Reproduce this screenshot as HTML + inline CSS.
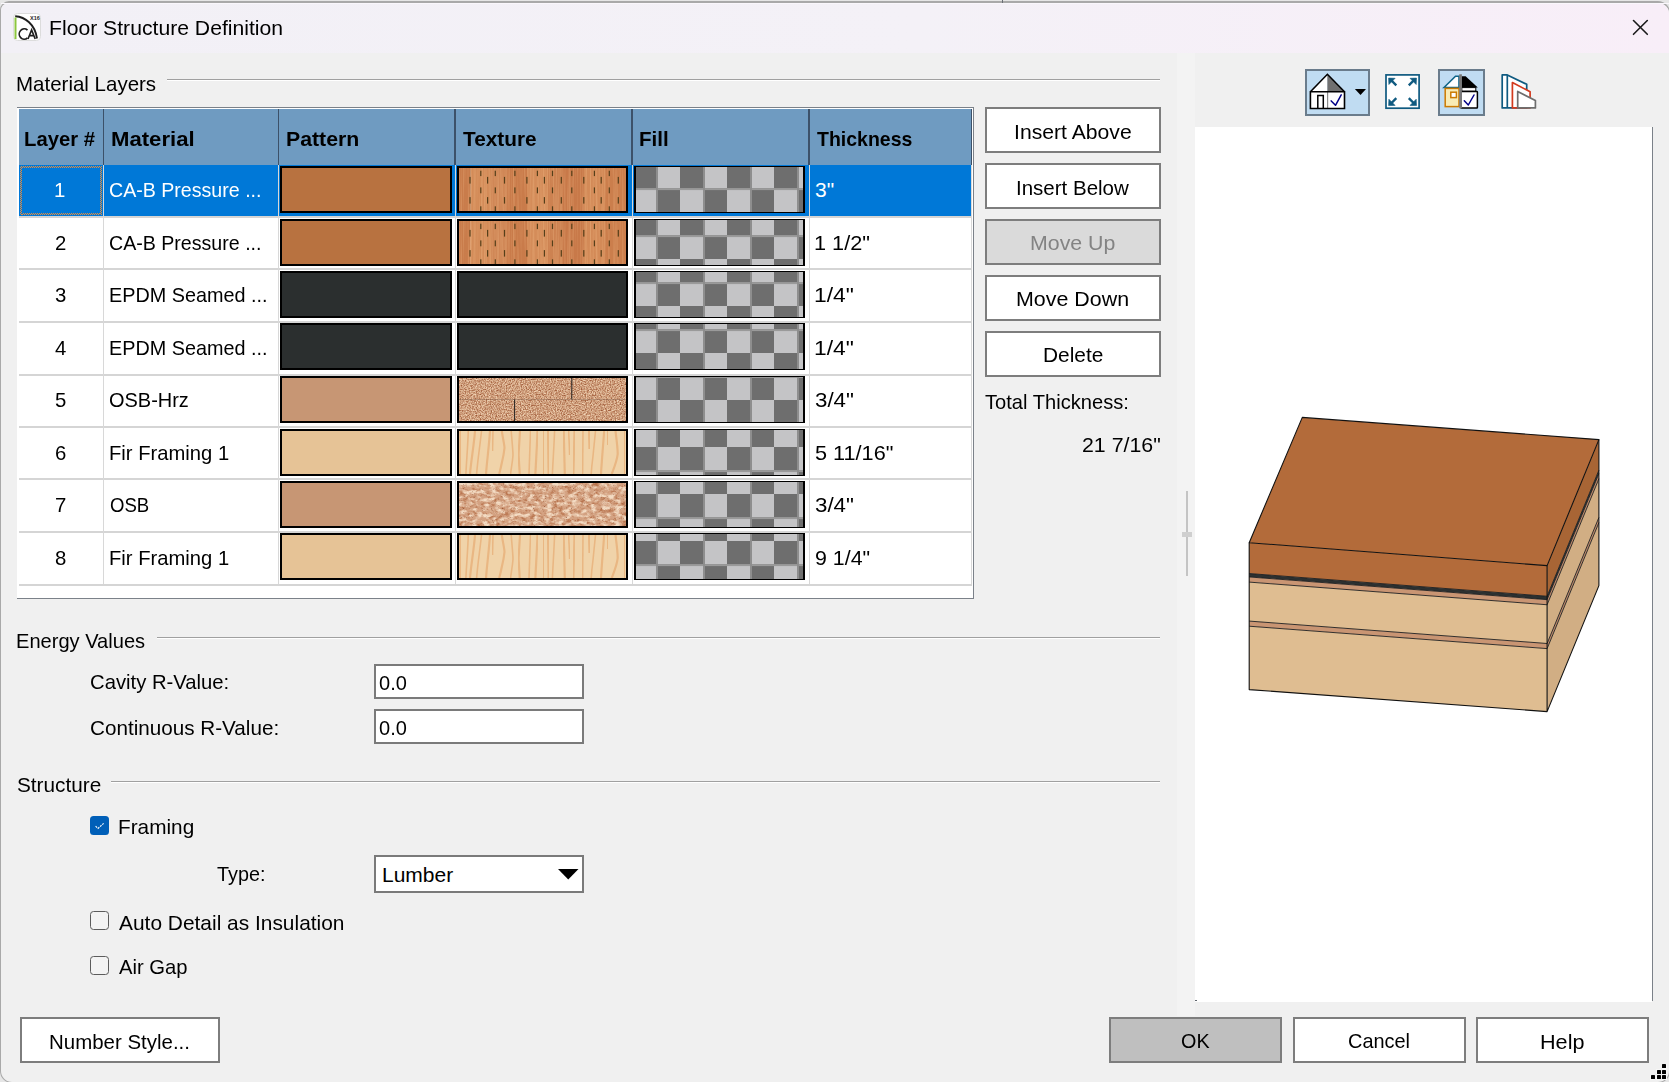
<!DOCTYPE html>
<html><head><meta charset="utf-8">
<style>
html,body{margin:0;padding:0;}
body{width:1669px;height:1082px;overflow:hidden;position:relative;background:#e6e6e6;font-family:"Liberation Sans",sans-serif;color:#000;}
.a{position:absolute;}
.t{position:absolute;white-space:pre;line-height:20px;font-size:21px;}
svg{position:absolute;overflow:visible;}
</style></head><body>
<svg width="0" height="0" style="position:absolute;left:0;top:0"><defs>
<filter id="fOsbh" x="0" y="0" width="100%" height="100%" color-interpolation-filters="sRGB">
<feTurbulence type="fractalNoise" baseFrequency="0.7 0.9" numOctaves="2" seed="3" result="n"/>
<feColorMatrix in="n" type="matrix" values="0 0 0 0 0  0 0 0 0 0  0 0 0 0 0  1.8 0 0 0 -0.45" result="a"/>
<feFlood flood-color="#f3d8bb" result="lt"/>
<feComposite in="lt" in2="a" operator="in" result="lts"/>
<feTurbulence type="fractalNoise" baseFrequency="0.8" numOctaves="1" seed="9" result="n2"/>
<feColorMatrix in="n2" type="matrix" values="0 0 0 0 0  0 0 0 0 0  0 0 0 0 0  0 2.6 0 0 -1.05" result="a2"/>
<feFlood flood-color="#9c5634" result="dk"/>
<feComposite in="dk" in2="a2" operator="in" result="dks"/>
<feMerge><feMergeNode in="SourceGraphic"/><feMergeNode in="lts"/><feMergeNode in="dks"/></feMerge>
</filter>
<filter id="fGrain" x="0" y="0" width="100%" height="100%" color-interpolation-filters="sRGB">
<feTurbulence type="fractalNoise" baseFrequency="0.7 0.015" numOctaves="2" seed="7" result="n"/>
<feColorMatrix in="n" type="matrix" values="0 0 0 0 1  0 0 0 0 0.82  0 0 0 0 0.62  0.7 0 0 0 -0.3" result="lt"/>
</filter>
<filter id="fBlur" x="-20%" y="-5%" width="140%" height="110%"><feGaussianBlur stdDeviation="0.45"/></filter>
<filter id="fOsb" x="0" y="0" width="100%" height="100%" color-interpolation-filters="sRGB">
<feTurbulence type="fractalNoise" baseFrequency="0.16 0.26" numOctaves="3" seed="5" result="n"/>
<feColorMatrix in="n" type="matrix" values="0 0 0 0 0  0 0 0 0 0  0 0 0 0 0  3.2 0 0 0 -1.35" result="a"/>
<feFlood flood-color="#f3dbc3" result="lt"/>
<feComposite in="lt" in2="a" operator="in" result="lts"/>
<feTurbulence type="fractalNoise" baseFrequency="0.22 0.3" numOctaves="3" seed="11" result="n2"/>
<feColorMatrix in="n2" type="matrix" values="0 0 0 0 0  0 0 0 0 0  0 0 0 0 0  0 3.2 0 0 -1.45" result="a2"/>
<feFlood flood-color="#b9754f" result="dk"/>
<feComposite in="dk" in2="a2" operator="in" result="dks"/>
<feTurbulence type="fractalNoise" baseFrequency="1.1" numOctaves="1" seed="21" result="n3"/>
<feColorMatrix in="n3" type="matrix" values="0 0 0 0 0  0 0 0 0 0  0 0 0 0 0  0 0 4 0 -2.6" result="a3"/>
<feFlood flood-color="#8a4a2c" result="sp"/>
<feComposite in="sp" in2="a3" operator="in" result="sps"/>
<feMerge><feMergeNode in="SourceGraphic"/><feMergeNode in="dks"/><feMergeNode in="lts"/><feMergeNode in="sps"/></feMerge>
</filter>
</defs></svg>
<div class="a" style="left:0px;top:1px;width:1670px;height:1082px;box-sizing:border-box;border:1px solid #a9a9a9;border-top-width:2px;border-radius:9px 12px 12px 12px;background:#f0f0f0;overflow:hidden;"></div>
<div class="a" style="left:1px;top:3px;width:1668px;height:50px;background:linear-gradient(90deg,#f2f0f6 0%,#f4f1f7 55%,#f8eef8 100%);border-top-left-radius:8px;border-top-right-radius:11px;"></div>
<div class="a" style="left:1002px;top:0px;width:1px;height:3px;background:#6a6e75;"></div>
<div class="a" style="left:1px;top:3px;width:1668px;height:1px;background:#faf7fc;"></div>
<svg style="left:13px;top:13px" width="28" height="28" viewBox="0 0 28 28">
<rect x="0.5" y="0.5" width="27" height="27" rx="4" fill="#fff" stroke="#dcdcdc" stroke-width="1"/>
<path d="M2.2 3.3 C12 4 22 11 24 25.5" fill="none" stroke="#1e1e1e" stroke-width="1.9"/>
<path d="M2.5 4.5 V26" stroke="#8cc63f" stroke-width="2"/>
<path d="M14.5 17.1 A5 5.2 0 1 0 14.5 25" fill="none" stroke="#1e1e1e" stroke-width="1.7"/>
<path d="M15 26 L18.6 17 L22.2 26 M16.3 22.6 H21" fill="none" stroke="#1e1e1e" stroke-width="1.6"/>
<text x="17" y="6.8" font-size="5.5" font-weight="bold" font-family="Liberation Sans" fill="#1e1e1e">X16</text>
</svg>
<div class="t" style="left:49.49px;top:18.42px;font-size:21px;color:#000;transform:scaleX(1.0079);transform-origin:0 0;">Floor Structure Definition</div>
<svg style="left:1632px;top:19px" width="17" height="17" viewBox="0 0 17 17">
<path d="M1.5 1.5 L15.3 15.3 M15.3 1.5 L1.5 15.3" stroke="#1a1a1a" stroke-width="1.6" stroke-linecap="round"/>
</svg>
<div class="t" style="left:16.04px;top:73.62px;font-size:21px;color:#000;transform:scaleX(0.9759);transform-origin:0 0;">Material Layers</div>
<div class="a" style="left:167px;top:79px;width:993px;height:1px;background:#a0a0a0;"></div>
<div class="a" style="left:167px;top:80px;width:993px;height:1px;background:#fff;"></div>
<div class="t" style="left:15.87px;top:630.52px;font-size:21px;color:#000;transform:scaleX(0.9562);transform-origin:0 0;">Energy Values</div>
<div class="a" style="left:157px;top:637px;width:1003px;height:1px;background:#a0a0a0;"></div>
<div class="a" style="left:157px;top:638px;width:1003px;height:1px;background:#fff;"></div>
<div class="t" style="left:16.51px;top:775.42px;font-size:21px;color:#000;transform:scaleX(0.9880);transform-origin:0 0;">Structure</div>
<div class="a" style="left:111px;top:781px;width:1049px;height:1px;background:#a0a0a0;"></div>
<div class="a" style="left:111px;top:782px;width:1049px;height:1px;background:#fff;"></div>
<div class="a" style="left:17px;top:107px;width:957px;height:492px;background:#fff;"></div>
<div class="a" style="left:17px;top:107px;width:957px;height:1px;background:#7b8189;"></div>
<div class="a" style="left:17px;top:598px;width:957px;height:1px;background:#7b8189;"></div>
<div class="a" style="left:973px;top:107px;width:1px;height:492px;background:#7b8189;"></div>
<div class="a" style="left:19px;top:109px;width:953px;height:56px;background:#6f9bc1;"></div>
<div class="a" style="left:102.5px;top:109px;width:1.6px;height:56px;background:#3c5169;"></div>
<div class="a" style="left:277.5px;top:109px;width:1.6px;height:56px;background:#3c5169;"></div>
<div class="a" style="left:454px;top:109px;width:1.6px;height:56px;background:#3c5169;"></div>
<div class="a" style="left:631px;top:109px;width:1.6px;height:56px;background:#3c5169;"></div>
<div class="a" style="left:808px;top:109px;width:1.6px;height:56px;background:#3c5169;"></div>
<div class="a" style="left:971px;top:109px;width:1px;height:56px;background:#3c5169;"></div>
<div class="t" style="left:24.45px;top:128.52px;font-size:21px;font-weight:bold;color:#000;transform:scaleX(0.9652);transform-origin:0 0;">Layer #</div>
<div class="t" style="left:110.72px;top:128.52px;font-size:21px;font-weight:bold;color:#000;transform:scaleX(1.0536);transform-origin:0 0;">Material</div>
<div class="t" style="left:285.78px;top:128.52px;font-size:21px;font-weight:bold;color:#000;transform:scaleX(1.0129);transform-origin:0 0;">Pattern</div>
<div class="t" style="left:463.10px;top:128.52px;font-size:21px;font-weight:bold;color:#000;transform:scaleX(0.9900);transform-origin:0 0;">Texture</div>
<div class="t" style="left:639.43px;top:128.52px;font-size:21px;font-weight:bold;color:#000;transform:scaleX(0.9782);transform-origin:0 0;">Fill</div>
<div class="t" style="left:816.81px;top:128.52px;font-size:21px;font-weight:bold;color:#000;transform:scaleX(0.9281);transform-origin:0 0;">Thickness</div>
<div class="a" style="left:19px;top:165px;width:953px;height:51px;background:#0078d7;"></div>
<div class="a" style="left:20px;top:166px;width:82px;height:2px;background:repeating-conic-gradient(#ee8b35 0 25%,#0078d7 0 50%) 0 0/2px 2px;"></div>
<div class="a" style="left:20px;top:213px;width:82px;height:2px;background:repeating-conic-gradient(#ee8b35 0 25%,#0078d7 0 50%) 0 0/2px 2px;"></div>
<div class="a" style="left:20px;top:166px;width:2px;height:49px;background:repeating-conic-gradient(#ee8b35 0 25%,#0078d7 0 50%) 0 0/2px 2px;"></div>
<div class="a" style="left:100px;top:166px;width:2px;height:49px;background:repeating-conic-gradient(#ee8b35 0 25%,#0078d7 0 50%) 0 0/2px 2px;"></div>
<div class="a" style="left:19px;top:216px;width:953px;height:2px;background:#d5d5d5;"></div>
<div class="t" style="left:54.43px;top:180.12px;font-size:21px;color:#fff;transform:scaleX(0.9700);transform-origin:0 0;">1</div>
<div class="t" style="left:109.37px;top:180.12px;font-size:21px;color:#fff;transform:scaleX(0.9333);transform-origin:0 0;">CA-B Pressure ...</div>
<div class="t" style="left:815.00px;top:180.12px;font-size:21px;color:#fff;">3&quot;</div>
<div class="a" style="left:280px;top:166px;width:172px;height:47px;box-sizing:border-box;border:2px solid #000;background:#b87240;"></div>
<div class="a" style="left:457px;top:166px;width:171px;height:47px;box-sizing:border-box;border:2px solid #000;overflow:hidden"><svg width="167" height="43" viewBox="0 0 167 43" style="left:0;top:0;position:absolute"><rect x="0" y="0" width="11.5" height="43" fill="#c97c4b"/><rect x="11.2" y="0" width="20.9" height="43" fill="#d38b58"/><rect x="31.8" y="0" width="16.5" height="43" fill="#d08756"/><rect x="48" y="0" width="20.3" height="43" fill="#c97b4a"/><rect x="68" y="0" width="21.3" height="43" fill="#d48c59"/><rect x="89" y="0" width="15.3" height="43" fill="#cd8251"/><rect x="104" y="0" width="21.3" height="43" fill="#c87949"/><rect x="125" y="0" width="21.3" height="43" fill="#d38a57"/><rect x="146" y="0" width="21.3" height="43" fill="#cb7e4c"/><rect width="167" height="43" fill="#000" filter="url(#fGrain)"/><rect x="21.2" y="2.7" width="1.2" height="5.4" fill="#553f1a"/><rect x="35.7" y="2.7" width="1.2" height="5.4" fill="#553f1a"/><rect x="55.3" y="2.7" width="1.2" height="5.4" fill="#553f1a"/><rect x="77.8" y="2.7" width="1.2" height="5.4" fill="#553f1a"/><rect x="92.9" y="2.7" width="1.2" height="5.4" fill="#553f1a"/><rect x="112.2" y="2.7" width="1.2" height="5.4" fill="#553f1a"/><rect x="134.8" y="2.7" width="1.2" height="5.4" fill="#553f1a"/><rect x="149.7" y="2.7" width="1.2" height="5.4" fill="#553f1a"/><rect x="21.2" y="19.4" width="1.2" height="5.9" fill="#553f1a"/><rect x="35.7" y="19.4" width="1.2" height="5.9" fill="#553f1a"/><rect x="55.3" y="19.4" width="1.2" height="5.9" fill="#553f1a"/><rect x="77.8" y="19.4" width="1.2" height="5.9" fill="#553f1a"/><rect x="92.9" y="19.4" width="1.2" height="5.9" fill="#553f1a"/><rect x="112.2" y="19.4" width="1.2" height="5.9" fill="#553f1a"/><rect x="134.8" y="19.4" width="1.2" height="5.9" fill="#553f1a"/><rect x="149.7" y="19.4" width="1.2" height="5.9" fill="#553f1a"/><rect x="21.2" y="38.3" width="1.2" height="4.7" fill="#553f1a"/><rect x="35.7" y="38.3" width="1.2" height="4.7" fill="#553f1a"/><rect x="55.3" y="38.3" width="1.2" height="4.7" fill="#553f1a"/><rect x="77.8" y="38.3" width="1.2" height="4.7" fill="#553f1a"/><rect x="92.9" y="38.3" width="1.2" height="4.7" fill="#553f1a"/><rect x="112.2" y="38.3" width="1.2" height="4.7" fill="#553f1a"/><rect x="134.8" y="38.3" width="1.2" height="4.7" fill="#553f1a"/><rect x="149.7" y="38.3" width="1.2" height="4.7" fill="#553f1a"/><rect x="10.4" y="8.9" width="1.2" height="6.7" fill="#553f1a"/><rect x="28.0" y="8.9" width="1.2" height="6.7" fill="#553f1a"/><rect x="44.9" y="8.9" width="1.2" height="6.7" fill="#553f1a"/><rect x="67.3" y="8.9" width="1.2" height="6.7" fill="#553f1a"/><rect x="84.8" y="8.9" width="1.2" height="6.7" fill="#553f1a"/><rect x="101.7" y="8.9" width="1.2" height="6.7" fill="#553f1a"/><rect x="124.2" y="8.9" width="1.2" height="6.7" fill="#553f1a"/><rect x="141.6" y="8.9" width="1.2" height="6.7" fill="#553f1a"/><rect x="158.7" y="8.9" width="1.2" height="6.7" fill="#553f1a"/><rect x="10.4" y="29.1" width="1.2" height="6.5" fill="#553f1a"/><rect x="28.0" y="29.1" width="1.2" height="6.5" fill="#553f1a"/><rect x="44.9" y="29.1" width="1.2" height="6.5" fill="#553f1a"/><rect x="67.3" y="29.1" width="1.2" height="6.5" fill="#553f1a"/><rect x="84.8" y="29.1" width="1.2" height="6.5" fill="#553f1a"/><rect x="101.7" y="29.1" width="1.2" height="6.5" fill="#553f1a"/><rect x="124.2" y="29.1" width="1.2" height="6.5" fill="#553f1a"/><rect x="141.6" y="29.1" width="1.2" height="6.5" fill="#553f1a"/><rect x="158.7" y="29.1" width="1.2" height="6.5" fill="#553f1a"/></svg></div>
<div class="a" style="left:634px;top:166px;width:171px;height:47px;box-sizing:border-box;border:solid #000;border-width:1.5px 2px 1.5px 2px;background-image:linear-gradient(90deg,#8e8e8e 0 2px,transparent 2px),linear-gradient(180deg,#9a9a9a 0 1.5px,transparent 1.5px),conic-gradient(#c4c4c6 0 25%,#6e6e6e 0 50%,#c4c4c6 0 75%,#6e6e6e 0);background-size:47px 100%,100% 47px,47px 47px;background-position:20px 0,0 21.099999999999994px,-3px -2.0px;"></div>
<div class="a" style="left:19px;top:268px;width:953px;height:2px;background:#d5d5d5;"></div>
<div class="t" style="left:54.77px;top:232.67px;font-size:21px;color:#000;transform:scaleX(0.9700);transform-origin:0 0;">2</div>
<div class="t" style="left:109.37px;top:232.67px;font-size:21px;color:#000;transform:scaleX(0.9333);transform-origin:0 0;">CA-B Pressure ...</div>
<div class="t" style="left:814.15px;top:232.67px;font-size:21px;color:#000;transform:scaleX(1.0329);transform-origin:0 0;">1 1/2&quot;</div>
<div class="a" style="left:280px;top:219px;width:172px;height:47px;box-sizing:border-box;border:2px solid #000;background:#b87240;"></div>
<div class="a" style="left:457px;top:219px;width:171px;height:47px;box-sizing:border-box;border:2px solid #000;overflow:hidden"><svg width="167" height="43" viewBox="0 0 167 43" style="left:0;top:0;position:absolute"><rect x="0" y="0" width="11.5" height="43" fill="#c97c4b"/><rect x="11.2" y="0" width="20.9" height="43" fill="#d38b58"/><rect x="31.8" y="0" width="16.5" height="43" fill="#d08756"/><rect x="48" y="0" width="20.3" height="43" fill="#c97b4a"/><rect x="68" y="0" width="21.3" height="43" fill="#d48c59"/><rect x="89" y="0" width="15.3" height="43" fill="#cd8251"/><rect x="104" y="0" width="21.3" height="43" fill="#c87949"/><rect x="125" y="0" width="21.3" height="43" fill="#d38a57"/><rect x="146" y="0" width="21.3" height="43" fill="#cb7e4c"/><rect width="167" height="43" fill="#000" filter="url(#fGrain)"/><rect x="21.2" y="2.7" width="1.2" height="5.4" fill="#553f1a"/><rect x="35.7" y="2.7" width="1.2" height="5.4" fill="#553f1a"/><rect x="55.3" y="2.7" width="1.2" height="5.4" fill="#553f1a"/><rect x="77.8" y="2.7" width="1.2" height="5.4" fill="#553f1a"/><rect x="92.9" y="2.7" width="1.2" height="5.4" fill="#553f1a"/><rect x="112.2" y="2.7" width="1.2" height="5.4" fill="#553f1a"/><rect x="134.8" y="2.7" width="1.2" height="5.4" fill="#553f1a"/><rect x="149.7" y="2.7" width="1.2" height="5.4" fill="#553f1a"/><rect x="21.2" y="19.4" width="1.2" height="5.9" fill="#553f1a"/><rect x="35.7" y="19.4" width="1.2" height="5.9" fill="#553f1a"/><rect x="55.3" y="19.4" width="1.2" height="5.9" fill="#553f1a"/><rect x="77.8" y="19.4" width="1.2" height="5.9" fill="#553f1a"/><rect x="92.9" y="19.4" width="1.2" height="5.9" fill="#553f1a"/><rect x="112.2" y="19.4" width="1.2" height="5.9" fill="#553f1a"/><rect x="134.8" y="19.4" width="1.2" height="5.9" fill="#553f1a"/><rect x="149.7" y="19.4" width="1.2" height="5.9" fill="#553f1a"/><rect x="21.2" y="38.3" width="1.2" height="4.7" fill="#553f1a"/><rect x="35.7" y="38.3" width="1.2" height="4.7" fill="#553f1a"/><rect x="55.3" y="38.3" width="1.2" height="4.7" fill="#553f1a"/><rect x="77.8" y="38.3" width="1.2" height="4.7" fill="#553f1a"/><rect x="92.9" y="38.3" width="1.2" height="4.7" fill="#553f1a"/><rect x="112.2" y="38.3" width="1.2" height="4.7" fill="#553f1a"/><rect x="134.8" y="38.3" width="1.2" height="4.7" fill="#553f1a"/><rect x="149.7" y="38.3" width="1.2" height="4.7" fill="#553f1a"/><rect x="10.4" y="8.9" width="1.2" height="6.7" fill="#553f1a"/><rect x="28.0" y="8.9" width="1.2" height="6.7" fill="#553f1a"/><rect x="44.9" y="8.9" width="1.2" height="6.7" fill="#553f1a"/><rect x="67.3" y="8.9" width="1.2" height="6.7" fill="#553f1a"/><rect x="84.8" y="8.9" width="1.2" height="6.7" fill="#553f1a"/><rect x="101.7" y="8.9" width="1.2" height="6.7" fill="#553f1a"/><rect x="124.2" y="8.9" width="1.2" height="6.7" fill="#553f1a"/><rect x="141.6" y="8.9" width="1.2" height="6.7" fill="#553f1a"/><rect x="158.7" y="8.9" width="1.2" height="6.7" fill="#553f1a"/><rect x="10.4" y="29.1" width="1.2" height="6.5" fill="#553f1a"/><rect x="28.0" y="29.1" width="1.2" height="6.5" fill="#553f1a"/><rect x="44.9" y="29.1" width="1.2" height="6.5" fill="#553f1a"/><rect x="67.3" y="29.1" width="1.2" height="6.5" fill="#553f1a"/><rect x="84.8" y="29.1" width="1.2" height="6.5" fill="#553f1a"/><rect x="101.7" y="29.1" width="1.2" height="6.5" fill="#553f1a"/><rect x="124.2" y="29.1" width="1.2" height="6.5" fill="#553f1a"/><rect x="141.6" y="29.1" width="1.2" height="6.5" fill="#553f1a"/><rect x="158.7" y="29.1" width="1.2" height="6.5" fill="#553f1a"/></svg></div>
<div class="a" style="left:634px;top:219px;width:171px;height:47px;box-sizing:border-box;border:solid #000;border-width:1.5px 2px 1.5px 2px;background-image:linear-gradient(90deg,#8e8e8e 0 2px,transparent 2px),linear-gradient(180deg,#9a9a9a 0 1.5px,transparent 1.5px),conic-gradient(#c4c4c6 0 25%,#6e6e6e 0 50%,#c4c4c6 0 75%,#6e6e6e 0);background-size:47px 100%,100% 47px,47px 47px;background-position:20px 0,0 15.099999999999994px,-3px -55.0px;"></div>
<div class="a" style="left:19px;top:321px;width:953px;height:2px;background:#d5d5d5;"></div>
<div class="t" style="left:54.77px;top:285.22px;font-size:21px;color:#000;transform:scaleX(0.9700);transform-origin:0 0;">3</div>
<div class="t" style="left:108.80px;top:285.22px;font-size:21px;color:#000;transform:scaleX(0.9428);transform-origin:0 0;">EPDM Seamed ...</div>
<div class="t" style="left:814.06px;top:285.22px;font-size:21px;color:#000;transform:scaleX(1.0877);transform-origin:0 0;">1/4&quot;</div>
<div class="a" style="left:280px;top:271px;width:172px;height:47px;box-sizing:border-box;border:2px solid #000;background:#2b2f2f;"></div>
<div class="a" style="left:457px;top:271px;width:171px;height:47px;box-sizing:border-box;border:2px solid #000;overflow:hidden"><svg width="167" height="43" viewBox="0 0 167 43" style="left:0;top:0;position:absolute"><rect width="167" height="43" fill="#2b2f2f"/></svg></div>
<div class="a" style="left:634px;top:271px;width:171px;height:47px;box-sizing:border-box;border:solid #000;border-width:1.5px 2px 1.5px 2px;background-image:linear-gradient(90deg,#8e8e8e 0 2px,transparent 2px),linear-gradient(180deg,#9a9a9a 0 1.5px,transparent 1.5px),conic-gradient(#c4c4c6 0 25%,#6e6e6e 0 50%,#c4c4c6 0 75%,#6e6e6e 0);background-size:47px 100%,100% 47px,47px 47px;background-position:20px 0,0 10.099999999999994px,-3px -107.0px;"></div>
<div class="a" style="left:19px;top:374px;width:953px;height:2px;background:#d5d5d5;"></div>
<div class="t" style="left:54.77px;top:337.77px;font-size:21px;color:#000;transform:scaleX(0.9700);transform-origin:0 0;">4</div>
<div class="t" style="left:108.80px;top:337.77px;font-size:21px;color:#000;transform:scaleX(0.9428);transform-origin:0 0;">EPDM Seamed ...</div>
<div class="t" style="left:814.06px;top:337.77px;font-size:21px;color:#000;transform:scaleX(1.0877);transform-origin:0 0;">1/4&quot;</div>
<div class="a" style="left:280px;top:323px;width:172px;height:47px;box-sizing:border-box;border:2px solid #000;background:#2b2f2f;"></div>
<div class="a" style="left:457px;top:323px;width:171px;height:47px;box-sizing:border-box;border:2px solid #000;overflow:hidden"><svg width="167" height="43" viewBox="0 0 167 43" style="left:0;top:0;position:absolute"><rect width="167" height="43" fill="#2b2f2f"/></svg></div>
<div class="a" style="left:634px;top:323px;width:171px;height:47px;box-sizing:border-box;border:solid #000;border-width:1.5px 2px 1.5px 2px;background-image:linear-gradient(90deg,#8e8e8e 0 2px,transparent 2px),linear-gradient(180deg,#9a9a9a 0 1.5px,transparent 1.5px),conic-gradient(#c4c4c6 0 25%,#6e6e6e 0 50%,#c4c4c6 0 75%,#6e6e6e 0);background-size:47px 100%,100% 47px,47px 47px;background-position:20px 0,0 5.099999999999994px,-3px -159.0px;"></div>
<div class="a" style="left:19px;top:426px;width:953px;height:2px;background:#d5d5d5;"></div>
<div class="t" style="left:54.77px;top:390.32px;font-size:21px;color:#000;transform:scaleX(0.9700);transform-origin:0 0;">5</div>
<div class="t" style="left:109.45px;top:390.32px;font-size:21px;color:#000;transform:scaleX(0.9500);transform-origin:0 0;">OSB-Hrz</div>
<div class="t" style="left:814.95px;top:390.32px;font-size:21px;color:#000;transform:scaleX(1.0629);transform-origin:0 0;">3/4&quot;</div>
<div class="a" style="left:280px;top:376px;width:172px;height:47px;box-sizing:border-box;border:2px solid #000;background:#c79674;"></div>
<div class="a" style="left:457px;top:376px;width:171px;height:47px;box-sizing:border-box;border:2px solid #000;overflow:hidden"><svg width="167" height="43" viewBox="0 0 167 43" style="left:0;top:0;position:absolute"><rect width="167" height="43" fill="#d2a07c" filter="url(#fOsbh)"/><path d="M0 21.5 H167" stroke="#8a6a55" stroke-width="0.8" opacity="0.6"/><path d="M112.8 0 V21.5 M55.6 21.5 V43" stroke="#222" stroke-width="1"/></svg></div>
<div class="a" style="left:634px;top:376px;width:171px;height:47px;box-sizing:border-box;border:solid #000;border-width:1.5px 2px 1.5px 2px;background-image:linear-gradient(90deg,#8e8e8e 0 2px,transparent 2px),linear-gradient(180deg,#9a9a9a 0 1.5px,transparent 1.5px),conic-gradient(#c4c4c6 0 25%,#6e6e6e 0 50%,#c4c4c6 0 75%,#6e6e6e 0);background-size:47px 100%,100% 47px,47px 47px;background-position:20px 0,0 46.099999999999994px,-3px -212.0px;"></div>
<div class="a" style="left:19px;top:478px;width:953px;height:2px;background:#d5d5d5;"></div>
<div class="t" style="left:54.63px;top:442.87px;font-size:21px;color:#000;transform:scaleX(0.9700);transform-origin:0 0;">6</div>
<div class="t" style="left:108.76px;top:442.87px;font-size:21px;color:#000;transform:scaleX(0.9624);transform-origin:0 0;">Fir Framing 1</div>
<div class="t" style="left:814.97px;top:442.87px;font-size:21px;color:#000;transform:scaleX(1.0323);transform-origin:0 0;">5 11/16&quot;</div>
<div class="a" style="left:280px;top:429px;width:172px;height:47px;box-sizing:border-box;border:2px solid #000;background:#e6c396;"></div>
<div class="a" style="left:457px;top:429px;width:171px;height:47px;box-sizing:border-box;border:2px solid #000;overflow:hidden"><svg width="167" height="43" viewBox="0 0 167 43" style="left:0;top:0;position:absolute"><rect width="167" height="43" fill="#f0d3a9"/><path d="M1.4 0 L1 43" fill="none" stroke="#e6a56a" stroke-width="2.2" opacity="0.6" filter="url(#fBlur)"/><path d="M9.3 0 C8.8 15 7.5 30 6.9 43" fill="none" stroke="#e6a56a" stroke-width="1.6" opacity="0.6" filter="url(#fBlur)"/><path d="M16 0 C15 14 12 30 11 43" fill="none" stroke="#e6a56a" stroke-width="2.2" opacity="0.6" filter="url(#fBlur)"/><path d="M22.5 0 C21 15 19 26 17.6 43" fill="none" stroke="#e6a56a" stroke-width="1.6" opacity="0.6" filter="url(#fBlur)"/><path d="M31 0 C30 15 28 30 27 43" fill="none" stroke="#e6a56a" stroke-width="2.2" opacity="0.6" filter="url(#fBlur)"/><path d="M34 0 L33.5 20" fill="none" stroke="#e6a56a" stroke-width="1.6" opacity="0.6" filter="url(#fBlur)"/><path d="M42.8 0 C44 8 45.5 14 45.5 17 C45 22 44 27 43 31 C42 36 41 40 40.2 43" fill="none" stroke="#e6a56a" stroke-width="2.2" opacity="0.6" filter="url(#fBlur)"/><path d="M52.2 0 C53 10 54 20 54 24 C53.5 32 52 38 51.6 43" fill="none" stroke="#e6a56a" stroke-width="1.6" opacity="0.6" filter="url(#fBlur)"/><path d="M61 0 C60.5 10 59.6 20 59.6 24 C60 32 60.5 38 60.7 43" fill="none" stroke="#e6a56a" stroke-width="2.2" opacity="0.6" filter="url(#fBlur)"/><path d="M71.5 0 C71 15 70.5 30 70 43" fill="none" stroke="#e6a56a" stroke-width="1.6" opacity="0.6" filter="url(#fBlur)"/><path d="M78.5 0 C78 15 77 30 76.4 43" fill="none" stroke="#e6a56a" stroke-width="2.2" opacity="0.6" filter="url(#fBlur)"/><path d="M84.5 0 L84.8 43" fill="none" stroke="#e6a56a" stroke-width="1.6" opacity="0.6" filter="url(#fBlur)"/><path d="M89 0 L89.6 43" fill="none" stroke="#e6a56a" stroke-width="2.2" opacity="0.6" filter="url(#fBlur)"/><path d="M95.6 0 C95 15 94 30 93.4 43" fill="none" stroke="#e6a56a" stroke-width="1.6" opacity="0.6" filter="url(#fBlur)"/><path d="M104.7 0 L105.8 43" fill="none" stroke="#e6a56a" stroke-width="2.2" opacity="0.6" filter="url(#fBlur)"/><path d="M109.6 0 C110 8 110.5 16 110.6 24" fill="none" stroke="#e6a56a" stroke-width="1.6" opacity="0.6" filter="url(#fBlur)"/><path d="M115.5 0 C115 15 114.6 30 114.4 43" fill="none" stroke="#e6a56a" stroke-width="2.2" opacity="0.6" filter="url(#fBlur)"/><path d="M124 0 L123.6 43" fill="none" stroke="#e6a56a" stroke-width="1.6" opacity="0.6" filter="url(#fBlur)"/><path d="M130 0 L130.5 18" fill="none" stroke="#e6a56a" stroke-width="2.2" opacity="0.6" filter="url(#fBlur)"/><path d="M136.5 0 C135.5 10 134.5 20 133.9 26 C133 33 132.5 38 132.2 43" fill="none" stroke="#e6a56a" stroke-width="1.6" opacity="0.6" filter="url(#fBlur)"/><path d="M145.2 0 C144 15 142.8 30 142 43" fill="none" stroke="#e6a56a" stroke-width="2.2" opacity="0.6" filter="url(#fBlur)"/><path d="M148.4 0 L148.6 14" fill="none" stroke="#e6a56a" stroke-width="1.6" opacity="0.6" filter="url(#fBlur)"/><path d="M156.5 0 C157.5 8 158.7 16 158.7 23 C158 30 155 37 152.7 43" fill="none" stroke="#e6a56a" stroke-width="2.2" opacity="0.6" filter="url(#fBlur)"/><path d="M165.5 0 L165.8 43" fill="none" stroke="#e6a56a" stroke-width="1.6" opacity="0.6" filter="url(#fBlur)"/></svg></div>
<div class="a" style="left:634px;top:429px;width:171px;height:47px;box-sizing:border-box;border:solid #000;border-width:1.5px 2px 1.5px 2px;background-image:linear-gradient(90deg,#8e8e8e 0 2px,transparent 2px),linear-gradient(180deg,#9a9a9a 0 1.5px,transparent 1.5px),conic-gradient(#c4c4c6 0 25%,#6e6e6e 0 50%,#c4c4c6 0 75%,#6e6e6e 0);background-size:47px 100%,100% 47px,47px 47px;background-position:20px 0,0 40.099999999999994px,-3px -265.0px;"></div>
<div class="a" style="left:19px;top:531px;width:953px;height:2px;background:#d5d5d5;"></div>
<div class="t" style="left:54.73px;top:495.42px;font-size:21px;color:#000;transform:scaleX(0.9700);transform-origin:0 0;">7</div>
<div class="t" style="left:109.52px;top:495.42px;font-size:21px;color:#000;transform:scaleX(0.8839);transform-origin:0 0;">OSB</div>
<div class="t" style="left:814.95px;top:495.42px;font-size:21px;color:#000;transform:scaleX(1.0629);transform-origin:0 0;">3/4&quot;</div>
<div class="a" style="left:280px;top:481px;width:172px;height:47px;box-sizing:border-box;border:2px solid #000;background:#c79674;"></div>
<div class="a" style="left:457px;top:481px;width:171px;height:47px;box-sizing:border-box;border:2px solid #000;overflow:hidden"><svg width="167" height="43" viewBox="0 0 167 43" style="left:0;top:0;position:absolute"><rect width="167" height="43" fill="#d4a282" filter="url(#fOsb)"/></svg></div>
<div class="a" style="left:634px;top:481px;width:171px;height:47px;box-sizing:border-box;border:solid #000;border-width:1.5px 2px 1.5px 2px;background-image:linear-gradient(90deg,#8e8e8e 0 2px,transparent 2px),linear-gradient(180deg,#9a9a9a 0 1.5px,transparent 1.5px),conic-gradient(#c4c4c6 0 25%,#6e6e6e 0 50%,#c4c4c6 0 75%,#6e6e6e 0);background-size:47px 100%,100% 47px,47px 47px;background-position:20px 0,0 35.10000000000002px,-3px -317.0px;"></div>
<div class="a" style="left:19px;top:584px;width:953px;height:2px;background:#d5d5d5;"></div>
<div class="t" style="left:54.73px;top:547.97px;font-size:21px;color:#000;transform:scaleX(0.9700);transform-origin:0 0;">8</div>
<div class="t" style="left:108.76px;top:547.97px;font-size:21px;color:#000;transform:scaleX(0.9624);transform-origin:0 0;">Fir Framing 1</div>
<div class="t" style="left:814.78px;top:547.97px;font-size:21px;color:#000;transform:scaleX(1.0172);transform-origin:0 0;">9 1/4&quot;</div>
<div class="a" style="left:280px;top:533px;width:172px;height:47px;box-sizing:border-box;border:2px solid #000;background:#e6c396;"></div>
<div class="a" style="left:457px;top:533px;width:171px;height:47px;box-sizing:border-box;border:2px solid #000;overflow:hidden"><svg width="167" height="43" viewBox="0 0 167 43" style="left:0;top:0;position:absolute"><rect width="167" height="43" fill="#f0d3a9"/><path d="M1.4 0 L1 43" fill="none" stroke="#e6a56a" stroke-width="2.2" opacity="0.6" filter="url(#fBlur)"/><path d="M9.3 0 C8.8 15 7.5 30 6.9 43" fill="none" stroke="#e6a56a" stroke-width="1.6" opacity="0.6" filter="url(#fBlur)"/><path d="M16 0 C15 14 12 30 11 43" fill="none" stroke="#e6a56a" stroke-width="2.2" opacity="0.6" filter="url(#fBlur)"/><path d="M22.5 0 C21 15 19 26 17.6 43" fill="none" stroke="#e6a56a" stroke-width="1.6" opacity="0.6" filter="url(#fBlur)"/><path d="M31 0 C30 15 28 30 27 43" fill="none" stroke="#e6a56a" stroke-width="2.2" opacity="0.6" filter="url(#fBlur)"/><path d="M34 0 L33.5 20" fill="none" stroke="#e6a56a" stroke-width="1.6" opacity="0.6" filter="url(#fBlur)"/><path d="M42.8 0 C44 8 45.5 14 45.5 17 C45 22 44 27 43 31 C42 36 41 40 40.2 43" fill="none" stroke="#e6a56a" stroke-width="2.2" opacity="0.6" filter="url(#fBlur)"/><path d="M52.2 0 C53 10 54 20 54 24 C53.5 32 52 38 51.6 43" fill="none" stroke="#e6a56a" stroke-width="1.6" opacity="0.6" filter="url(#fBlur)"/><path d="M61 0 C60.5 10 59.6 20 59.6 24 C60 32 60.5 38 60.7 43" fill="none" stroke="#e6a56a" stroke-width="2.2" opacity="0.6" filter="url(#fBlur)"/><path d="M71.5 0 C71 15 70.5 30 70 43" fill="none" stroke="#e6a56a" stroke-width="1.6" opacity="0.6" filter="url(#fBlur)"/><path d="M78.5 0 C78 15 77 30 76.4 43" fill="none" stroke="#e6a56a" stroke-width="2.2" opacity="0.6" filter="url(#fBlur)"/><path d="M84.5 0 L84.8 43" fill="none" stroke="#e6a56a" stroke-width="1.6" opacity="0.6" filter="url(#fBlur)"/><path d="M89 0 L89.6 43" fill="none" stroke="#e6a56a" stroke-width="2.2" opacity="0.6" filter="url(#fBlur)"/><path d="M95.6 0 C95 15 94 30 93.4 43" fill="none" stroke="#e6a56a" stroke-width="1.6" opacity="0.6" filter="url(#fBlur)"/><path d="M104.7 0 L105.8 43" fill="none" stroke="#e6a56a" stroke-width="2.2" opacity="0.6" filter="url(#fBlur)"/><path d="M109.6 0 C110 8 110.5 16 110.6 24" fill="none" stroke="#e6a56a" stroke-width="1.6" opacity="0.6" filter="url(#fBlur)"/><path d="M115.5 0 C115 15 114.6 30 114.4 43" fill="none" stroke="#e6a56a" stroke-width="2.2" opacity="0.6" filter="url(#fBlur)"/><path d="M124 0 L123.6 43" fill="none" stroke="#e6a56a" stroke-width="1.6" opacity="0.6" filter="url(#fBlur)"/><path d="M130 0 L130.5 18" fill="none" stroke="#e6a56a" stroke-width="2.2" opacity="0.6" filter="url(#fBlur)"/><path d="M136.5 0 C135.5 10 134.5 20 133.9 26 C133 33 132.5 38 132.2 43" fill="none" stroke="#e6a56a" stroke-width="1.6" opacity="0.6" filter="url(#fBlur)"/><path d="M145.2 0 C144 15 142.8 30 142 43" fill="none" stroke="#e6a56a" stroke-width="2.2" opacity="0.6" filter="url(#fBlur)"/><path d="M148.4 0 L148.6 14" fill="none" stroke="#e6a56a" stroke-width="1.6" opacity="0.6" filter="url(#fBlur)"/><path d="M156.5 0 C157.5 8 158.7 16 158.7 23 C158 30 155 37 152.7 43" fill="none" stroke="#e6a56a" stroke-width="2.2" opacity="0.6" filter="url(#fBlur)"/><path d="M165.5 0 L165.8 43" fill="none" stroke="#e6a56a" stroke-width="1.6" opacity="0.6" filter="url(#fBlur)"/></svg></div>
<div class="a" style="left:634px;top:533px;width:171px;height:47px;box-sizing:border-box;border:solid #000;border-width:1.5px 2px 1.5px 2px;background-image:linear-gradient(90deg,#8e8e8e 0 2px,transparent 2px),linear-gradient(180deg,#9a9a9a 0 1.5px,transparent 1.5px),conic-gradient(#c4c4c6 0 25%,#6e6e6e 0 50%,#c4c4c6 0 75%,#6e6e6e 0);background-size:47px 100%,100% 47px,47px 47px;background-position:20px 0,0 30.100000000000023px,-3px -369.0px;"></div>
<div class="a" style="left:103.0px;top:165px;width:1.3px;height:419px;background:#d8d8d8;"></div>
<div class="a" style="left:278.0px;top:165px;width:1.3px;height:419px;background:#d8d8d8;"></div>
<div class="a" style="left:454.5px;top:165px;width:1.3px;height:419px;background:#d8d8d8;"></div>
<div class="a" style="left:631.5px;top:165px;width:1.3px;height:419px;background:#d8d8d8;"></div>
<div class="a" style="left:808.5px;top:165px;width:1.3px;height:419px;background:#d8d8d8;"></div>
<div class="a" style="left:971px;top:165px;width:1px;height:419px;background:#d8d8d8;"></div>
<div class="a" style="left:985px;top:107px;width:176px;height:46px;box-sizing:border-box;border:2px solid #7d7d7d;background:#fff;"></div>
<div class="t" style="left:1013.99px;top:121.72px;font-size:21px;color:#000;transform:scaleX(1.0079);transform-origin:0 0;">Insert Above</div>
<div class="a" style="left:985px;top:163px;width:176px;height:46px;box-sizing:border-box;border:2px solid #7d7d7d;background:#fff;"></div>
<div class="t" style="left:1015.75px;top:177.52px;font-size:21px;color:#000;transform:scaleX(0.9763);transform-origin:0 0;">Insert Below</div>
<div class="a" style="left:985px;top:219px;width:176px;height:46px;box-sizing:border-box;border:2px solid #7d7d7d;background:#dadada;"></div>
<div class="t" style="left:1030.07px;top:233.42px;font-size:21px;color:#838383;transform:scaleX(1.0160);transform-origin:0 0;">Move Up</div>
<div class="a" style="left:985px;top:275px;width:176px;height:46px;box-sizing:border-box;border:2px solid #7d7d7d;background:#fff;"></div>
<div class="t" style="left:1016.37px;top:289.42px;font-size:21px;color:#000;transform:scaleX(1.0195);transform-origin:0 0;">Move Down</div>
<div class="a" style="left:985px;top:331px;width:176px;height:46px;box-sizing:border-box;border:2px solid #7d7d7d;background:#fff;"></div>
<div class="t" style="left:1042.61px;top:345.42px;font-size:21px;color:#000;transform:scaleX(0.9931);transform-origin:0 0;">Delete</div>
<div class="t" style="left:984.92px;top:392.32px;font-size:21px;color:#000;transform:scaleX(0.9580);transform-origin:0 0;">Total Thickness:</div>
<div class="t" style="left:1082.38px;top:434.72px;font-size:21px;color:#000;transform:scaleX(1.0159);transform-origin:0 0;">21 7/16&quot;</div>
<div class="t" style="left:89.84px;top:672.32px;font-size:21px;color:#000;transform:scaleX(0.9646);transform-origin:0 0;">Cavity R-Value:</div>
<div class="t" style="left:89.82px;top:717.62px;font-size:21px;color:#000;transform:scaleX(0.9841);transform-origin:0 0;">Continuous R-Value:</div>
<div class="a" style="left:374px;top:664px;width:210px;height:35px;box-sizing:border-box;border:2px solid #7a7a7a;background:#fff;"></div>
<div class="t" style="left:378.64px;top:672.72px;font-size:21px;color:#000;transform:scaleX(0.9529);transform-origin:0 0;">0.0</div>
<div class="a" style="left:374px;top:709px;width:210px;height:35px;box-sizing:border-box;border:2px solid #7a7a7a;background:#fff;"></div>
<div class="t" style="left:378.64px;top:717.72px;font-size:21px;color:#000;transform:scaleX(0.9529);transform-origin:0 0;">0.0</div>
<div class="a" style="left:90px;top:816px;width:19px;height:19px;background:#005fb8;border-radius:3.5px;"></div>
<svg style="left:90px;top:816px" width="19" height="19" viewBox="0 0 19 19"><path d="M5.6 10.2 L8 12.4 L13.6 7.4" fill="none" stroke="#fff" stroke-width="1.1" stroke-dasharray="2 1"/></svg>
<div class="t" style="left:117.82px;top:817.32px;font-size:21px;color:#000;transform:scaleX(0.9892);transform-origin:0 0;">Framing</div>
<div class="t" style="left:216.73px;top:864.32px;font-size:21px;color:#000;transform:scaleX(0.9427);transform-origin:0 0;">Type:</div>
<div class="a" style="left:374px;top:855px;width:210px;height:38px;box-sizing:border-box;border:2px solid #7a7a7a;background:#fff;"></div>
<div class="t" style="left:382.00px;top:864.82px;font-size:21px;color:#000;">Lumber</div>
<svg style="left:558px;top:869px" width="21" height="11" viewBox="0 0 21 11"><path d="M0 0 H20.5 L10.25 10.5 Z" fill="#000"/></svg>
<div class="a" style="left:90px;top:911px;width:19px;height:19px;box-sizing:border-box;border:1px solid #5c5c5c;border-radius:3.5px;background:#f3f3f3;"></div>
<div class="t" style="left:118.80px;top:912.92px;font-size:21px;color:#000;transform:scaleX(0.9956);transform-origin:0 0;">Auto Detail as Insulation</div>
<div class="a" style="left:90px;top:956px;width:19px;height:19px;box-sizing:border-box;border:1px solid #5c5c5c;border-radius:3.5px;background:#f3f3f3;"></div>
<div class="t" style="left:118.80px;top:957.42px;font-size:21px;color:#000;transform:scaleX(0.9630);transform-origin:0 0;">Air Gap</div>
<div class="a" style="left:1177px;top:53px;width:18px;height:963px;background:#f3f3f3;"></div>
<div class="a" style="left:1186px;top:491px;width:2px;height:85px;background:#c4c4c4;"></div>
<div class="a" style="left:1182px;top:532px;width:10px;height:5px;background:#cfcfcf;"></div>
<div class="a" style="left:1195px;top:127px;width:457px;height:875px;background:#fff;"></div>
<div class="a" style="left:1652px;top:127px;width:1px;height:874px;background:#7b8189;"></div>
<div class="a" style="left:1195px;top:1000px;width:2px;height:1px;background:#5f656d;"></div>
<div class="a" style="left:1305px;top:69px;width:65px;height:47px;box-sizing:border-box;border:2px solid #6a7c8c;background:#c0dcf2;"></div>
<div class="a" style="left:1438px;top:69px;width:47px;height:47px;box-sizing:border-box;border:2px solid #6a7c8c;background:#c0dcf2;"></div>
<svg style="left:1300px;top:64px" width="75" height="56" viewBox="0 0 75 56">
<path d="M27.4 10.3 L10.4 27.7 H27.4 Z" fill="#fff"/>
<path d="M27.4 10.3 L44.5 27.7 H27.4 Z" fill="#707070"/>
<rect x="10.4" y="27.7" width="34.1" height="16.8" fill="#fff"/>
<path d="M27.6 28 V44.3" stroke="#8a8a8a" stroke-width="1.2"/>
<path d="M10.4 27.7 L27.4 10.3 L44.5 27.7 M10.4 27.7 H44.5 V44.5 H10.4 Z" fill="none" stroke="#000" stroke-width="1.6" stroke-linejoin="miter"/>
<path d="M17.8 44.5 V31.6 H23.3 V44.5" fill="none" stroke="#000" stroke-width="1.5"/>
<path d="M31.2 36.9 L35.5 41.3 L41.2 30.8" fill="none" stroke="#000088" stroke-width="1.5" stroke-linecap="round" stroke-linejoin="round"/>
<path d="M54.9 25.1 H66 L60.5 31 Z" fill="#000"/>
</svg>
<svg style="left:1380px;top:66px" width="50" height="50" viewBox="0 0 50 50">
<rect x="6" y="8.9" width="33.1" height="33.3" fill="#fff" stroke="#0f5a80" stroke-width="1.7"/>
<g stroke="#0f5a80" stroke-width="2.4" fill="none">
<path d="M10.5 13.5 L16.3 19.3"/><path d="M34.6 13.5 L28.8 19.3"/><path d="M10.5 38 L16.3 32.2"/><path d="M34.6 38 L28.8 32.2"/>
</g>
<g fill="#0f5a80" stroke="#0f5a80" stroke-width="0.6" stroke-linejoin="round">
<path d="M8.6 12.1 L15.1 12.3 L8.9 18.5 Z"/><path d="M36.5 12.1 L30 12.3 L36.2 18.5 Z"/>
<path d="M8.6 39.6 L15.1 39.4 L8.9 33.2 Z"/><path d="M36.5 39.6 L30 39.4 L36.2 33.2 Z"/>
</g>
</svg>
<svg style="left:1434px;top:64px" width="56" height="56" viewBox="0 0 56 56">
<path d="M10 23.5 L21.5 12.3 H25 V23.5 Z" fill="#fff" stroke="#0f6488" stroke-width="1.6"/>
<rect x="11.2" y="24.4" width="13.8" height="18.2" fill="#f9ebb4" stroke="#cc7a00" stroke-width="1.5"/>
<rect x="16.8" y="28.2" width="5.6" height="5.4" fill="#fff" stroke="#cc7a00" stroke-width="1.5"/>
<path d="M27.5 12.2 H31.6 L43.8 23.6 H27.5 Z" fill="#000"/>
<rect x="27.8" y="23.6" width="14" height="3.6" fill="#fff" stroke="#000" stroke-width="1"/>
<rect x="26.8" y="27.6" width="16.6" height="16.4" rx="0.6" fill="#fff" stroke="#000" stroke-width="1.5"/>
<path d="M30.3 36.8 L34.3 41 L40 31" fill="none" stroke="#000088" stroke-width="1.5" stroke-linecap="round" stroke-linejoin="round"/>
<rect x="25.2" y="10.3" width="2.7" height="34" fill="#7a7a7a"/>
</svg>
<svg style="left:1494px;top:66px" width="50" height="50" viewBox="0 0 50 50">
<path d="M8.2 8.9 H13.3 L32.7 18.3 V41.9 H8.2 Z" fill="#fff" stroke="#0f5a80" stroke-width="1.7" stroke-linejoin="round"/>
<path d="M13.3 8.9 V41.9" stroke="#0f5a80" stroke-width="1.7"/>
<path d="M18.4 16.6 L36.1 25.7 V41.9 H18.4 Z" fill="#fff" stroke="#d23a1e" stroke-width="1.7" stroke-linejoin="round"/>
<path d="M23.7 25.4 L41.4 34.6 V41.9 H23.7 Z" fill="#fff" stroke="#6e6e6e" stroke-width="1.7" stroke-linejoin="round"/>
</svg>
<svg style="left:0;top:0" width="1669" height="1082" viewBox="0 0 1669 1082"><path d="M1249.2 542.70 L1547.1 565.60 L1547.1 596.25 L1249.2 573.54 Z" fill="#b36b3a"/><path d="M1547.1 565.60 L1598.90 439.60 L1598.90 470.25 L1547.1 596.25 Z" fill="#a86535"/><path d="M1249.2 573.54 L1547.1 596.25 L1547.1 599.65 L1249.2 576.96 Z" fill="#2c3030"/><path d="M1547.1 596.25 L1598.90 470.25 L1598.90 473.65 L1547.1 599.65 Z" fill="#2c3030"/><path d="M1249.2 576.96 L1547.1 599.65 L1547.1 604.76 L1249.2 582.10 Z" fill="#c99573"/><path d="M1547.1 599.65 L1598.90 473.65 L1598.90 478.76 L1547.1 604.76 Z" fill="#c08b6b"/><path d="M1249.2 582.10 L1547.1 604.76 L1547.1 643.50 L1249.2 621.08 Z" fill="#dfbd91"/><path d="M1547.1 604.76 L1598.90 478.76 L1598.90 517.50 L1547.1 643.50 Z" fill="#d1ae84"/><path d="M1249.2 621.08 L1547.1 643.50 L1547.1 648.60 L1249.2 626.21 Z" fill="#c99573"/><path d="M1547.1 643.50 L1598.90 517.50 L1598.90 522.60 L1547.1 648.60 Z" fill="#c08b6b"/><path d="M1249.2 626.21 L1547.1 648.60 L1547.1 711.60 L1249.2 689.60 Z" fill="#dfbd91"/><path d="M1547.1 648.60 L1598.90 522.60 L1598.90 585.60 L1547.1 711.60 Z" fill="#d1ae84"/><path d="M1249.2 573.54 L1547.1 596.25 L1598.90 470.25" fill="none" stroke="#1e1e1e" stroke-width="0.9"/><path d="M1249.2 576.96 L1547.1 599.65 L1598.90 473.65" fill="none" stroke="#1e1e1e" stroke-width="0.9"/><path d="M1249.2 582.10 L1547.1 604.76 L1598.90 478.76" fill="none" stroke="#1e1e1e" stroke-width="0.9"/><path d="M1249.2 621.08 L1547.1 643.50 L1598.90 517.50" fill="none" stroke="#1e1e1e" stroke-width="0.9"/><path d="M1249.2 626.21 L1547.1 648.60 L1598.90 522.60" fill="none" stroke="#1e1e1e" stroke-width="0.9"/><path d="M1249.2 542.7 L1547.1 565.6 L1598.90 439.60 L1302.3 417.4 Z" fill="#b36b3a" stroke="#111" stroke-width="1.1" stroke-linejoin="round"/><path d="M1249.2 542.7 V689.6 L1547.1 711.6 L1598.90 585.60 V439.60 M1547.1 565.6 V711.6" fill="none" stroke="#111" stroke-width="1.1" stroke-linejoin="round"/></svg>
<div class="a" style="left:20px;top:1017px;width:200px;height:46px;box-sizing:border-box;border:2px solid #7d7d7d;background:#fff;"></div>
<div class="t" style="left:49.34px;top:1031.62px;font-size:21px;color:#000;transform:scaleX(0.9738);transform-origin:0 0;">Number Style...</div>
<div class="a" style="left:1109px;top:1017px;width:173px;height:46px;box-sizing:border-box;border:2px solid #7d7d7d;background:#bfbfbf;"></div>
<div class="t" style="left:1181.06px;top:1031.42px;font-size:21px;color:#000;transform:scaleX(0.9414);transform-origin:0 0;">OK</div>
<div class="a" style="left:1293px;top:1017px;width:173px;height:46px;box-sizing:border-box;border:2px solid #7d7d7d;background:#fff;"></div>
<div class="t" style="left:1348.26px;top:1031.42px;font-size:21px;color:#000;transform:scaleX(0.9491);transform-origin:0 0;">Cancel</div>
<div class="a" style="left:1476px;top:1017px;width:173px;height:46px;box-sizing:border-box;border:2px solid #7d7d7d;background:#fff;"></div>
<div class="t" style="left:1540.45px;top:1031.72px;font-size:21px;color:#000;transform:scaleX(1.0296);transform-origin:0 0;">Help</div>
<div class="a" style="left:1661.5px;top:1063.5px;width:5px;height:5px;background:#f7f7f7;"></div>
<div class="a" style="left:1656.1px;top:1069.2px;width:5px;height:5px;background:#f7f7f7;"></div>
<div class="a" style="left:1661.5px;top:1069.2px;width:5px;height:5px;background:#f7f7f7;"></div>
<div class="a" style="left:1650.3px;top:1074.9px;width:5px;height:5px;background:#f7f7f7;"></div>
<div class="a" style="left:1656.1px;top:1074.9px;width:5px;height:5px;background:#f7f7f7;"></div>
<div class="a" style="left:1661.5px;top:1074.9px;width:5px;height:5px;background:#f7f7f7;"></div>
<div class="a" style="left:1662px;top:1064px;width:4px;height:4px;background:#000;border-radius:0.6px;"></div>
<div class="a" style="left:1656.6px;top:1069.7px;width:4px;height:4px;background:#000;border-radius:0.6px;"></div>
<div class="a" style="left:1662px;top:1069.7px;width:4px;height:4px;background:#000;border-radius:0.6px;"></div>
<div class="a" style="left:1650.8px;top:1075.4px;width:4px;height:4px;background:#000;border-radius:0.6px;"></div>
<div class="a" style="left:1656.6px;top:1075.4px;width:4px;height:4px;background:#000;border-radius:0.6px;"></div>
<div class="a" style="left:1662px;top:1075.4px;width:4px;height:4px;background:#000;border-radius:0.6px;"></div>
</body></html>
